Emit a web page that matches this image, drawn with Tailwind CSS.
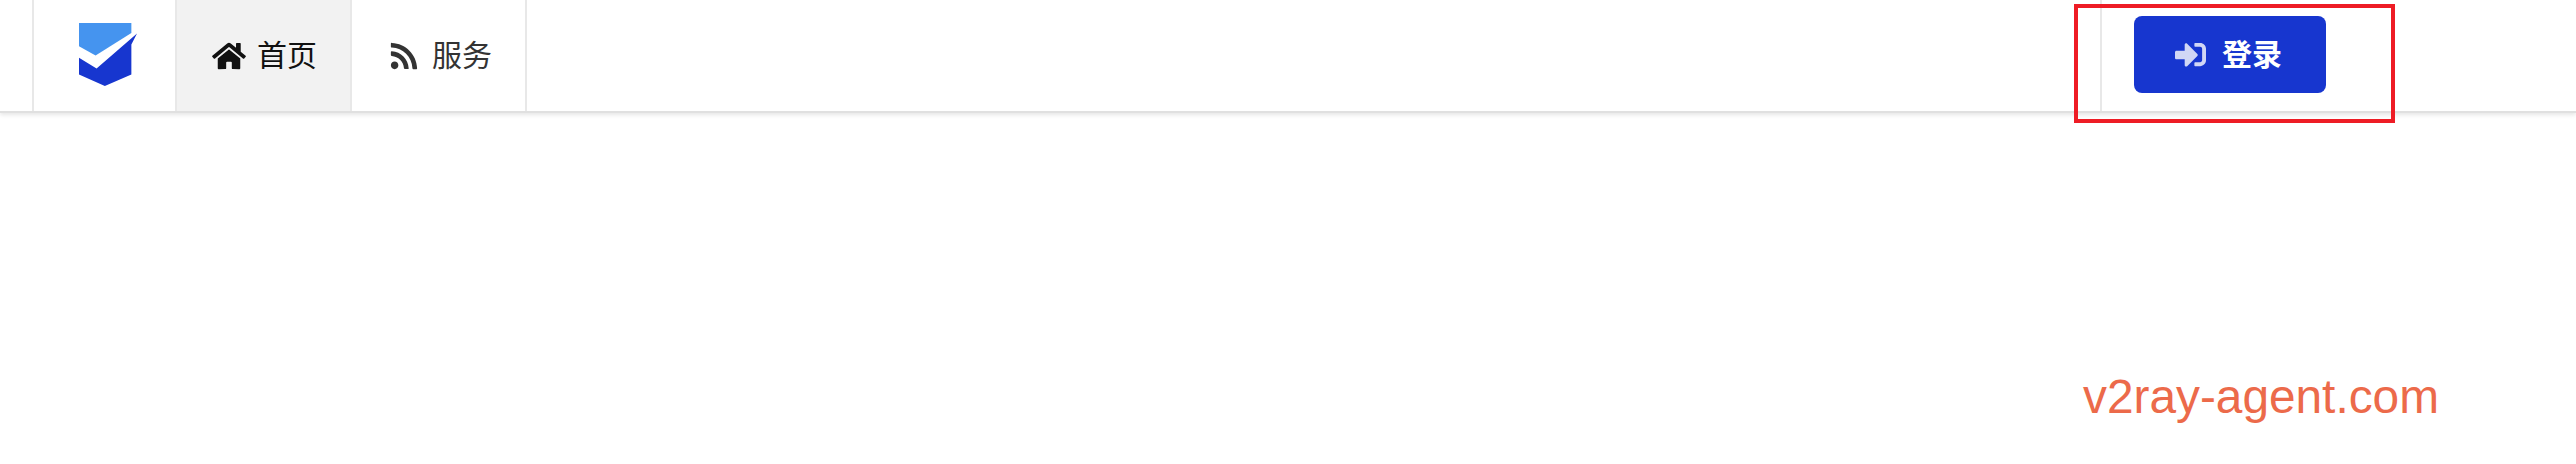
<!DOCTYPE html>
<html lang="zh-CN">
<head>
  <meta charset="UTF-8" />
  <title>v2ray-agent</title>
  <script src="https://cdn.jsdelivr.net/npm/@tailwindcss/browser@4"></script>
</head>
<body class="relative bg-white h-[464px] overflow-hidden font-['Liberation_Sans','Noto_Sans_CJK_SC',sans-serif]">

  <!-- Top menu -->
  <nav class="flex justify-between h-[113px] pl-[32px] bg-white border-b-2 border-[#e0e0e0] shadow-[0_2px_4px_rgba(0,0,0,0.1)]">
    <div class="flex border-r-2 border-[#e8e8e8]">
      <a class="flex items-center w-[143px] pl-[45px] pb-[2px] border-l-2 border-[#e8e8e8]">
        <svg class="w-[58px] h-[63px]" viewBox="57 40 175 190">
          <path fill="#4594ef" d="M57 40H215V70L107 138L57 110Z" />
          <path fill="#1736cf" d="M57 145L110 177L232 72L215 105V195L135 230L57 195Z" />
        </svg>
      </a>
      <a class="flex items-center w-[175px] gap-[11px] pl-[35px] bg-[#f2f2f2] border-l-2 border-[#e8e8e8] text-[30px] text-[#111]">
        <svg class="w-[34px] h-[30px]" viewBox="0 0 576 512" fill="currentColor">
          <path d="M280.37 148.26L96 300.11V464a16 16 0 0 0 16 16l112.06-.29a16 16 0 0 0 15.92-16V368a16 16 0 0 1 16-16h64a16 16 0 0 1 16 16v95.64a16 16 0 0 0 16 16.05L464 480a16 16 0 0 0 16-16V300L295.67 148.26a12.19 12.19 0 0 0-15.3 0zM571.6 251.47L488 182.56V44.05a12 12 0 0 0-12-12h-56a12 12 0 0 0-12 12v72.61L318.47 43a48 48 0 0 0-61 0L4.34 251.47a12 12 0 0 0-1.6 16.9l25.5 31A12 12 0 0 0 45.15 301l235.22-193.74a12.19 12.19 0 0 1 15.3 0L530.9 301a12 12 0 0 0 16.9-1.6l25.5-31a12 12 0 0 0-1.7-16.93z" />
        </svg>
        <span>首页</span>
      </a>
      <a class="flex items-center w-[175px] gap-[11px] pl-[35px] border-l-2 border-[#e8e8e8] text-[30px] text-[#333]">
        <svg class="w-[34px] h-[30px]" viewBox="0 0 448 512" fill="currentColor">
          <path d="M128.081 415.959c0 35.369-28.672 64.041-64.041 64.041S0 451.328 0 415.959s28.672-64.041 64.041-64.041 64.04 28.673 64.04 64.041zm175.66 47.25c-8.354-154.6-132.185-278.587-286.95-286.95C7.656 175.765 0 183.105 0 192.253v48.069c0 8.415 6.49 15.472 14.887 16.018 111.832 7.284 201.473 96.702 208.772 208.772.547 8.397 7.604 14.887 16.018 14.887h48.069c9.149.001 16.489-7.655 15.995-16.79zm144.249.288C439.596 229.677 251.465 40.445 16.503 32.01 7.473 31.686 0 38.981 0 48.016v48.068c0 8.625 6.835 15.645 15.453 15.999 191.179 7.839 344.627 161.316 352.465 352.465.353 8.618 7.373 15.453 15.999 15.453h48.068c9.034-.001 16.329-7.474 16.005-16.504z" />
        </svg>
        <span>服务</span>
      </a>
    </div>

    <div class="flex items-start w-[476px] pl-[32px] border-l-2 border-[#e8e8e8] pt-[16px]">
      <button class="flex items-center gap-[16px] w-[192px] h-[77px] pl-[41px] rounded-[8px] bg-[#1736cf] text-white text-[30px] font-bold">
        <svg class="w-[31px] h-[31px] text-white/80" viewBox="0 0 512 512" fill="currentColor">
          <path d="M416 448h-84c-6.6 0-12-5.4-12-12v-40c0-6.6 5.4-12 12-12h84c17.7 0 32-14.3 32-32V160c0-17.7-14.3-32-32-32h-84c-6.6 0-12-5.4-12-12V76c0-6.6 5.4-12 12-12h84c53 0 96 43 96 96v192c0 53-43 96-96 96zm-47-201L201 79c-15-15-41-4.5-41 17v96H24c-13.3 0-24 10.7-24 24v96c0 13.3 10.7 24 24 24h136v96c0 21.5 26 32 41 17l168-168c9.3-9.4 9.3-24.6 0-34z" />
        </svg>
        <span>登录</span>
      </button>
    </div>
  </nav>

  <!-- Annotation over the screenshot -->
  <div class="absolute left-[2074px] top-[4px] w-[321px] h-[119px] border-[4px] border-[#ee1c25]"></div>
  <div class="absolute left-[2083px] top-[369px] text-[47.8px] leading-[56px] text-[#ec6a4a]">v2ray-agent.com</div>

</body>
</html>
